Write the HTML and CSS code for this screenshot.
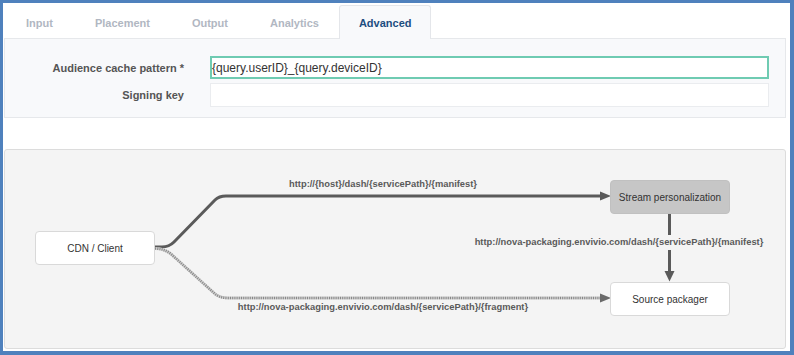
FILE: index.html
```html
<!DOCTYPE html>
<html>
<head>
<meta charset="utf-8">
<link rel="stylesheet" href="styles.css">
</head>
<body>
<div class="frame">
  <div class="tabs">
    <div class="tab">Input</div>
    <div class="tab">Placement</div>
    <div class="tab">Output</div>
    <div class="tab">Analytics</div>
    <div class="tab active">Advanced</div>
  </div>
  <div class="form">
    <div class="label">Audience cache pattern *</div>
    <div class="field focused">{query.userID}_{query.deviceID}</div>
    <div class="label">Signing key</div>
    <div class="field"></div>
  </div>
  <div class="diagram">
    <svg class="wires" viewBox="5 150 780 198" width="780" height="198">
      <path d="M154 247 H162 Q169 247 174 242 L215 200 Q219 196 226 196 H601" fill="none" stroke="#5a5a5a" stroke-width="3"/>
      <polygon points="600,191.5 611,196 600,200.5" fill="#5a5a5a"/>
      <path d="M155 248.5 Q164 248.5 171 254 L214 293 Q219 298 228 298 H601" fill="none" stroke="#cfcfcf" stroke-width="3"/>
      <path d="M155 248.5 Q164 248.5 171 254 L214 293 Q219 298 228 298 H601" fill="none" stroke="#888" stroke-width="2.6" stroke-dasharray="1 1.2"/>
      <polygon points="600,293.5 611,298 600,302.5" fill="#6a6a6a"/>
      <path d="M669.5 214 V272" fill="none" stroke="#5a5a5a" stroke-width="3"/>
      <polygon points="664.5,271 674.5,271 669.5,281.5" fill="#5a5a5a"/>
    </svg>
    <div class="node client">CDN / Client</div>
    <div class="node personal">Stream personalization</div>
    <div class="node source">Source packager</div>
    <div class="edge e-top">http://{host}/dash/{servicePath}/{manifest}</div>
    <div class="edge e-mid">http://nova-packaging.envivio.com/dash/{servicePath}/{manifest}</div>
    <div class="edge e-bot">http://nova-packaging.envivio.com/dash/{servicePath}/{fragment}</div>
  </div>
</div>
</body>
</html>
```
FILE: styles.css
```css
html, body {
  margin: 0;
  padding: 0;
  background: #fff;
}
body {
  font-family: "Liberation Sans", Arial, sans-serif;
}
.frame {
  width: 794px;
  height: 355px;
  box-sizing: border-box;
  border-style: solid;
  border-color: #4f81bd;
  border-width: 3px 4px 4px 3px;
  background: #fff;
  padding: 0 4px 0 1px;
  overflow: hidden;
}
.tabs {
  display: flex;
  align-items: flex-end;
  height: 35px;
  padding-left: 2px;
}
.tab {
  height: 33px;
  line-height: 36px;
  padding: 0 20px;
  margin-right: 2px;
  font-size: 11px;
  font-weight: bold;
  color: #b1b7c2;
  box-sizing: border-box;
}
.tab.active {
  position: relative;
  z-index: 1;
  padding: 0 19px;
  margin-left: -2px;
  margin-bottom: -1px;
  height: 34px;
  line-height: 35px;
  background: #f8f9fb;
  border: 1px solid #e4e6ea;
  border-bottom: none;
  border-radius: 3px 3px 0 0;
  color: #1d4e80;
}
.form {
  box-sizing: border-box;
  height: 80px;
  background: #f8f9fb;
  border: 1px solid #e6e8eb;
  display: grid;
  grid-template-columns: 179px 559px;
  grid-template-rows: 23px 24px;
  column-gap: 26px;
  row-gap: 4px;
  padding: 17px 16px 0 0;
}
.label {
  text-align: right;
  font-size: 11px;
  font-weight: bold;
  color: #555;
  display: flex;
  align-items: center;
  justify-content: flex-end;
}
.field {
  box-sizing: border-box;
  background: #fff;
  border: 1px solid #eaecef;
  font-size: 12px;
  color: #333;
  display: flex;
  align-items: center;
  padding: 0;
}
.field.focused {
  border: 2px solid #6fcbb2;
}
.diagram {
  position: relative;
  box-sizing: border-box;
  margin-top: 31px;
  height: 200px;
  background: #f4f4f4;
  border: 1px solid #dcdcdc;
  border-radius: 3px;
}
.wires {
  position: absolute;
  left: 0;
  top: 0;
  display: block;
}
.node {
  position: absolute;
  box-sizing: border-box;
  width: 120px;
  height: 34px;
  border: 1px solid #d9d9d9;
  border-radius: 4px;
  background: #fff;
  font-size: 10px;
  color: #333;
  display: flex;
  align-items: center;
  justify-content: center;
}
.node.client { left: 30px; top: 81px; }
.node.personal { left: 605px; top: 30px; background: #c6c6c6; border-color: #c0c0c0; }
.node.source { left: 605px; top: 132px; }
.edge {
  position: absolute;
  font-size: 9.35px;
  font-weight: bold;
  line-height: 11px;
  color: #5a5a5a;
  white-space: nowrap;
  transform: translateX(-50%);
}
.e-top { left: 378px; top: 29px; }
.e-mid { left: 614px; top: 85px; padding: 2px 0; background: #f4f4f4; }
.e-bot { left: 378px; top: 152px; }
```
